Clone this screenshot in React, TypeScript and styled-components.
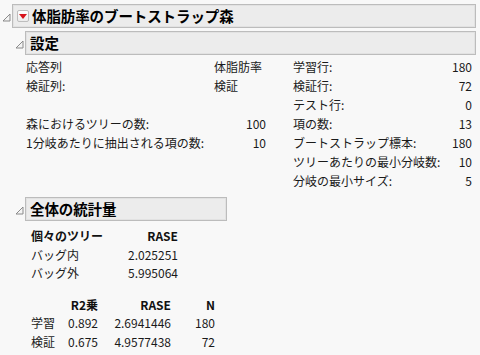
import React, { FC } from "react";
import styled, { createGlobalStyle } from "styled-components";

const GlobalStyle = createGlobalStyle`
  html, body {
    margin: 0;
    padding: 0;
    background: #f8f8f8;
  }
  body {
    font-family: "Noto Sans CJK JP", "Noto Sans", sans-serif;
    font-size: 12px;
    color: #1a1a1a;
  }
`;

type Row = { label: string; value?: string; numeric?: boolean };

const leftRows: Row[] = [
  { label: "応答列", value: "体脂肪率" },
  { label: "検証列:", value: "検証" },
  { label: "" },
  { label: "森におけるツリーの数:", value: "100", numeric: true },
  { label: "1分岐あたりに抽出される項の数:", value: "10", numeric: true },
];

const rightRows: Row[] = [
  { label: "学習行:", value: "180" },
  { label: "検証行:", value: "72" },
  { label: "テスト行:", value: "0" },
  { label: "項の数:", value: "13" },
  { label: "ブートストラップ標本:", value: "180" },
  { label: "ツリーあたりの最小分岐数:", value: "10" },
  { label: "分岐の最小サイズ:", value: "5" },
];

const Disclosure: FC = () => (
  <Tri width="9" height="9" viewBox="0 0 9 9">
    <polygon points="8,1 8,8 1,8" fill="#f4f4f4" stroke="#8a8a8a" strokeWidth="1" />
  </Tri>
);

const RedMenu: FC = () => (
  <MenuButton>
    <svg width="8" height="5" viewBox="0 0 8 5">
      <polygon points="0,0 8,0 4,5" fill="#d8141c" />
    </svg>
  </MenuButton>
);

const App: FC = () => {
  return (
    <Page>
      <GlobalStyle />
      <OutlineRow>
        <Disclosure />
        <HeaderBox height={24}>
          <RedMenu />
          <HeaderTitle>体脂肪率のブートストラップ森</HeaderTitle>
        </HeaderBox>
      </OutlineRow>

      <Indent>
        <OutlineRow top={3}>
          <Disclosure />
          <HeaderBox height={24}>
            <HeaderTitle>設定</HeaderTitle>
          </HeaderBox>
        </OutlineRow>

        <SettingsArea>
          <SettingsTable width={240} valueWidth={52}>
            {leftRows.map((r, i) => (
              <React.Fragment key={i}>
                <Cell>{r.label}</Cell>
                <Cell align={r.numeric ? "right" : "left"}>{r.value ?? ""}</Cell>
              </React.Fragment>
            ))}
          </SettingsTable>
          <SettingsTable width={179} valueWidth={30}>
            {rightRows.map((r, i) => (
              <React.Fragment key={i}>
                <Cell>{r.label}</Cell>
                <Cell align="right">{r.value}</Cell>
              </React.Fragment>
            ))}
          </SettingsTable>
        </SettingsArea>

        <OutlineRow top={7}>
          <Disclosure />
          <HeaderBox height={24} width={202}>
            <HeaderTitle>全体の統計量</HeaderTitle>
          </HeaderBox>
        </OutlineRow>

        <StatsArea>
          <StatsTable cols="72px 75px">
            <Cell bold>個々のツリー</Cell>
            <Cell bold align="right">RASE</Cell>
            <Cell>バッグ内</Cell>
            <Cell align="right">2.025251</Cell>
            <Cell>バッグ外</Cell>
            <Cell align="right">5.995064</Cell>
          </StatsTable>

          <StatsTable cols="24px 43px 73px 44px" top={13}>
            <Cell />
            <Cell bold align="right">R2乗</Cell>
            <Cell bold align="right">RASE</Cell>
            <Cell bold align="right">N</Cell>
            <Cell>学習</Cell>
            <Cell align="right">0.892</Cell>
            <Cell align="right">2.6941446</Cell>
            <Cell align="right">180</Cell>
            <Cell>検証</Cell>
            <Cell align="right">0.675</Cell>
            <Cell align="right">4.9577438</Cell>
            <Cell align="right">72</Cell>
          </StatsTable>
        </StatsArea>
      </Indent>
    </Page>
  );
};

export default App;

const Page = styled.div`
  width: 480px;
  height: 355px;
  box-sizing: border-box;
  padding: 4px 4px 0 2px;
  overflow: hidden;
`;

const Indent = styled.div`
  padding-left: 13px;
`;

const OutlineRow = styled.div<{ top?: number }>`
  display: flex;
  align-items: center;
  gap: 1px;
  margin-top: ${p => p.top ?? 0}px;
`;

const Tri = styled.svg`
  flex: none;
  margin-top: 3px;
`;

const HeaderBox = styled.div<{ height: number; width?: number }>`
  display: flex;
  align-items: center;
  gap: 3px;
  box-sizing: border-box;
  height: ${p => p.height}px;
  ${p => (p.width ? `width: ${p.width}px;` : "flex: 1;")}
  padding-left: 4px;
  background: #ececec;
  border: 1px solid #bcbcbc;
  box-shadow: inset 0 0 0 1px #e2e2e2;
`;

const HeaderTitle = styled.span`
  font-size: 14.5px;
  font-weight: 700;
  line-height: 1;
  color: #000;
  letter-spacing: -0.1px;
`;

const MenuButton = styled.span`
  display: inline-flex;
  align-items: center;
  justify-content: center;
  width: 12px;
  height: 12px;
  box-sizing: border-box;
  border: 1px solid #bdbdbd;
  border-radius: 2px;
  background: linear-gradient(#ffffff, #ececec);
`;

const SettingsArea = styled.div`
  display: flex;
  align-items: flex-start;
  gap: 27px;
  padding: 2px 0 0 11px;
`;

const SettingsTable = styled.div<{ width: number; valueWidth: number }>`
  display: grid;
  grid-template-columns: 1fr ${p => p.valueWidth}px;
  grid-auto-rows: 19px;
  width: ${p => p.width}px;
`;

const Cell = styled.div<{ align?: "left" | "right"; bold?: boolean }>`
  line-height: 19px;
  white-space: nowrap;
  text-align: ${p => p.align ?? "left"};
  font-weight: ${p => (p.bold ? 700 : 400)};
  color: ${p => (p.bold ? "#111" : "#1a1a1a")};
`;

const StatsArea = styled.div`
  padding: 5px 0 0 16px;
`;

const StatsTable = styled.div<{ cols: string; top?: number }>`
  display: grid;
  grid-template-columns: ${p => p.cols};
  grid-auto-rows: 18.5px;
  margin-top: ${p => p.top ?? 0}px;
`;
